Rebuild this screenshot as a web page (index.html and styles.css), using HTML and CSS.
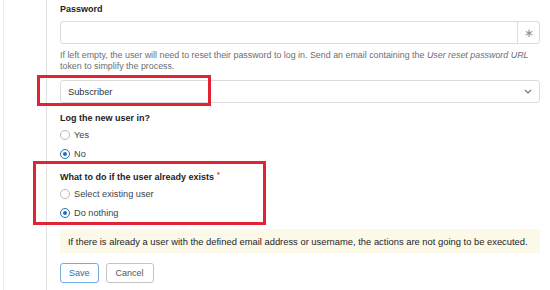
FILE: index.html
```html
<!DOCTYPE html>
<html>
<head>
<meta charset="utf-8">
<link rel="stylesheet" href="styles.css">
</head>
<body>
<div class="page">
  <div class="panel">
    <div class="field">
      <label class="label">Password</label>
      <div class="input-group">
        <div class="input"></div>
        <div class="addon">&#x2217;</div>
      </div>
      <p class="help">If left empty, the user will need to reset their password to log in. Send an email containing the <em>User reset password URL</em> token to simplify the process.</p>
    </div>
    <div class="select">
      <span>Subscriber</span>
      <svg class="chev" width="8" height="5" viewBox="0 0 8 5"><path d="M1 1l3 3 3-3" fill="none" stroke="#777" stroke-width="1.2"/></svg>
    </div>
    <div class="field login">
      <label class="label">Log the new user in?</label>
      <div class="radio"><span class="dot"></span>Yes</div>
      <div class="radio"><span class="dot on"></span>No</div>
    </div>
    <div class="field exists">
      <label class="label">What to do if the user already exists<span class="req">*</span></label>
      <div class="radio"><span class="dot"></span>Select existing user</div>
      <div class="radio"><span class="dot on"></span>Do nothing</div>
    </div>
    <div class="notice">If there is already a user with the defined email address or username, the actions are not going to be executed.</div>
    <div class="actions">
      <button class="btn primary">Save</button>
      <button class="btn">Cancel</button>
    </div>
    <div class="mark mark-a"></div>
    <div class="mark mark-b"></div>
  </div>
</div>
</body>
</html>
```
FILE: styles.css
```css
* { box-sizing: border-box; }
html, body { margin: 0; padding: 0; background: #fff; }
body {
  font-family: "Liberation Sans", Arial, sans-serif;
  font-size: 9px;
  color: #1d2327;
  width: 550px;
  height: 290px;
  overflow: hidden;
}
.page {
  margin-left: 3px;
  border-left: 1px solid #ececec;
  height: 290px;
  padding-left: 42px;
}
.panel {
  position: relative;
  border-left: 1px solid #e2e2e2;
  height: 290px;
  padding: 2px 10px 0 13px;
}
.label {
  display: block;
  font-weight: 700;
  font-size: 9px;
  line-height: 14px;
  color: #1d2327;
}
.input-group {
  display: flex;
  margin-top: 5px;
  height: 23px;
  border: 1px solid #dcdcde;
  border-radius: 3px;
}
.input { flex: 1; }
.addon {
  width: 22px;
  border-left: 1px solid #dcdcde;
  color: #8c8f94;
  display: flex;
  align-items: center;
  justify-content: center;
  font-size: 12px;
}
.help {
  margin: 5px 0 0;
  padding-top: 1px;
  font-size: 8.9px;
  line-height: 11px;
  color: #6b6e73;
}
.select {
  margin-top: 8px;
  height: 23px;
  border: 1px solid #dcdcde;
  border-radius: 3px;
  display: flex;
  align-items: center;
  justify-content: space-between;
  padding: 0 7px 0 7px;
  font-size: 9.3px;
  color: #2c3338;
}
.login { margin-top: 8px; }
.radio {
  display: flex;
  align-items: center;
  height: 19px;
  padding-top: 1px;
  font-size: 9.2px;
  color: #3c434a;
}
.dot {
  width: 10px;
  height: 10px;
  border: 1px solid #b9b9b9;
  border-radius: 50%;
  margin-right: 4px;
  display: inline-block;
  position: relative;
}
.dot.on { border-color: #2271b1; }
.dot.on::after {
  content: "";
  position: absolute;
  left: 2px; top: 2px;
  width: 4px; height: 4px;
  border-radius: 50%;
  background: #2271b1;
}
.exists { margin-top: 7px; }
.exists .radio { padding-top: 0; }
.req { color: #d63638; font-size: 7px; vertical-align: top; margin-left: 3px; line-height: 10px; }
.notice {
  margin-top: 7px;
  background: #fcf9e8;
  height: 24px;
  display: flex;
  align-items: center;
  padding-left: 8px;
  font-size: 9.4px;
  color: #1d2327;
}
.actions {
  margin-top: 10px;
  display: flex;
  gap: 7px;
}
.btn {
  font-family: inherit;
  font-size: 9px;
  height: 20px;
  padding: 0 9px;
  background: #fff;
  border: 1px solid #c3c4c7;
  border-radius: 3px;
  color: #50575e;
}
.btn.primary { border-color: #72aee6; color: #2271b1; padding: 0 8px; }
.mark {
  position: absolute;
  border: 3px solid #e02433;
}
.mark-a { left: -10px; top: 75px; width: 174px; height: 31px; }
.mark-b { left: -14px; top: 161px; width: 233px; height: 64px; }
```
